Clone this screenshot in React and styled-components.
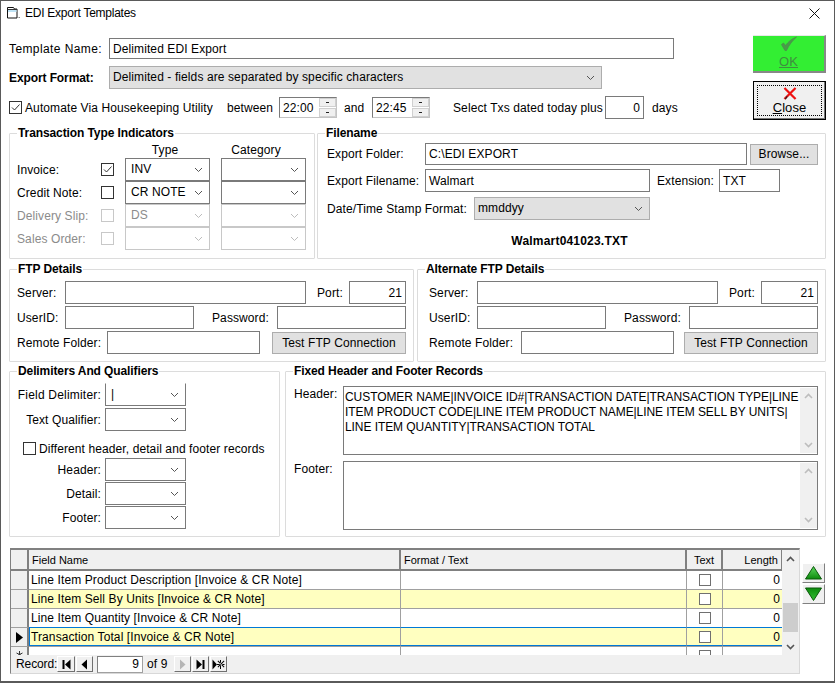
import React from 'react';
import styled, { createGlobalStyle } from 'styled-components';

const GlobalStyle = createGlobalStyle`
    html, body { margin: 0; padding: 0; background: #fff; }
    * { box-sizing: border-box; }
    body {
        font-family: "Liberation Sans", Arial, sans-serif;
        font-size: 12px;
        letter-spacing: .1px;
        color: #000;
    }
`

const Window = styled.div`
    width: 835px;
    height: 683px;
    border: 1px solid #5a5a5a;
    border-bottom-width: 2px;
    background: #fff;
    overflow: hidden;
`
const TitleBar = styled.div`
    height: 29px;
    display: flex;
    align-items: center;
    padding: 0 14px 5px 5px;
    gap: 4px;
`
const Title = styled.span`
    flex: 1;
    letter-spacing: -.25px;
`
const Main = styled.div`
    padding: 0 8px 0 8px;
`
const Top = styled.div`
    display: flex;
    height: 96px;
    padding-top: 5px;
`
const TopForm = styled.div`
    width: 744px;
    padding-top: 3px;
    display: flex;
    flex-direction: column;
`
const Row = styled.div`
    display: flex;
    align-items: ${p => p.$top ? 'flex-start' : 'center'};
    margin-top: ${p => p.$mt || 0}px;
    margin-left: ${p => p.$ml || 0}px;
    height: ${p => p.$h ? p.$h + 'px' : 'auto'};
`
const Label = styled.label`
    width: ${p => p.$w ? p.$w + 'px' : 'auto'};
    flex: none;
    white-space: nowrap;
    margin-left: ${p => p.$ml || 0}px;
    padding-top: ${p => p.$pt || 0}px;
    font-weight: ${p => p.$bold ? 'bold' : 'normal'};
    letter-spacing: ${p => p.$ls === undefined ? '.1' : p.$ls}px;
    text-align: ${p => p.$right ? 'right' : 'left'};
    color: ${p => p.$off ? '#8b8b8b' : '#000'};
`
const Input = styled.div`
    width: ${p => p.$w}px;
    height: ${p => p.$h || 23}px;
    margin-left: ${p => p.$ml || 0}px;
    flex: none;
    display: flex;
    align-items: center;
    justify-content: ${p => p.$right ? 'flex-end' : 'flex-start'};
    padding: 0 3px;
    border: 1px solid #7a7a7a;
    background: #fff;
    white-space: nowrap;
`
const Combo = styled.div`
    width: ${p => p.$w}px;
    height: ${p => p.$h || 23}px;
    margin-left: ${p => p.$ml || 0}px;
    flex: none;
    display: flex;
    align-items: center;
    justify-content: space-between;
    padding: 0 6px 0 ${p => p.$pl || 5}px;
    border: 1px solid ${p => p.$off ? '#c8c8c8' : p.$grey ? '#adadad' : '#7a7a7a'};
    border-top-color: ${p => p.$noTop ? 'transparent' : p.$off ? '#c8c8c8' : p.$grey ? '#adadad' : '#7a7a7a'};
    background: ${p => p.$grey ? '#e1e1e1' : '#fff'};
    color: ${p => p.$off ? '#8b8b8b' : '#000'};
    white-space: nowrap;
    & > span { padding-bottom: 1px; }
`
const Check = styled.span`
    width: 13px;
    height: 13px;
    flex: none;
    display: inline-block;
    margin-left: ${p => p.$ml || 0}px;
    border: 1px solid ${p => p.$off ? '#c8c8c8' : '#333'};
    background: #fff;
    & svg { display: block; }
`
const SpinBox = styled.div`
    width: 58px;
    height: 21px;
    flex: none;
    margin-left: ${p => p.$ml || 0}px;
    display: flex;
    align-items: center;
    justify-content: space-between;
    padding-left: 3px;
    border: 1px solid #c4c4c4;
    border-top-color: #7a7a7a;
    border-left-color: #7a7a7a;
`
const SpinBtns = styled.div`
    width: 17px;
    height: 19px;
    display: flex;
    flex-direction: column;
    gap: 1px;
`
const SpinBtn = styled.div`
    flex: 1;
    background: #f0f0f0;
    border: 1px solid #d0d0d0;
    display: flex;
    align-items: center;
    justify-content: center;
    &::after {
        content: "";
        width: 3px;
        height: 1px;
        background: #222;
    }
`
const SideButtons = styled.div`
    margin-left: 1px;
    width: 73px;
    flex: none;
    display: flex;
    flex-direction: column;
    gap: 8px;
`
const OkButton = styled.div`
    height: 38px;
    background: #33ee33;
    border-right: 2px solid #888;
    border-bottom: 2px solid #888;
    border-top: 1px solid #e8e8e8;
    display: flex;
    flex-direction: column;
    align-items: center;
    color: #3f8f3f;
    & u { line-height: 14px; margin-top: 3px; font-size: 13px; }
`
const CloseButton = styled.div`
    height: 39px;
    border: 1px solid #000;
    background: #f0f0f0;
    padding: 3px;
    box-shadow: inset -1px -1px 0 #777;
`
const CloseInner = styled.div`
    height: 100%;
    border: 1px dotted #000;
    display: flex;
    flex-direction: column;
    align-items: center;
    padding-top: 1px;
    & u { line-height: 14px; }
    & span { line-height: 15px; font-size: 13px; }
`
const SectionRow = styled.div`
    display: flex;
    justify-content: space-between;
    margin-top: ${p => p.$mt || 0}px;
`
const Group = styled.fieldset`
    margin: 0;
    min-width: 0;
    width: ${p => p.$w}px;
    height: ${p => p.$h}px;
    padding: ${p => p.$pt || 0}px 7px 0 ${p => p.$pl || 7}px;
    border: 1px solid #dcdcdc;
    border-radius: 1px;
`
const Legend = styled.legend`
    font-weight: bold;
    font-size: 12px;
    line-height: 15px;
    letter-spacing: -.1px;
    padding: 0 1px;
    margin-left: ${p => p.$ml || 0}px;
`
const ColHeads = styled.div`
    display: flex;
    height: 15px;
    line-height: 14px;
    margin-top: 2px;
    margin-left: 108px;
`
const ColHead = styled.div`
    width: ${p => p.$w}px;
    margin-right: 11px;
    text-align: center;
`
const Stamp = styled.div`
    font-weight: bold;
    letter-spacing: .2px;
    text-align: center;
    margin-top: 14px;
    padding-right: 4px;
`
const Button = styled.div`
    width: ${p => p.$w}px;
    height: ${p => p.$h || 22}px;
    margin-left: ${p => p.$ml || 0}px;
    flex: none;
    background: #e1e1e1;
    border: 1px solid #adadad;
    display: flex;
    align-items: center;
    justify-content: center;
`
const MemoWrap = styled.div`
    width: ${p => p.$w}px;
    height: ${p => p.$h}px;
    flex: none;
    border: 1px solid #7a7a7a;
    padding: 3px 20px 0 1px;
    line-height: 15px;
    letter-spacing: -.07px;
    position: relative;
    overflow: hidden;
    white-space: nowrap;
`
const MemoScroll = styled.div`
    position: absolute;
    top: 1px;
    right: 0;
    bottom: 1px;
    width: 17px;
    background: #f0f0f0;
    display: flex;
    flex-direction: column;
    justify-content: space-between;
    align-items: center;
    padding: 5px 0;
`
const GridRow = styled.div`
    display: flex;
    margin-top: 11px;
    margin-left: 1px;
    gap: 2px;
`
const GridBox = styled.div`
    width: 790px;
    height: 126px;
    border: 1px solid #d8d8d8;
    border-top: 2px solid #808080;
    border-left: 1px solid #808080;
    background: #fff;
    display: flex;
    flex-direction: column;
`
const GridBody = styled.div`
    flex: 1;
    min-height: 0;
    display: flex;
`
const Sheet = styled.div`
    width: 772px;
    overflow: hidden;
`
const Cols = styled.div`
    display: grid;
    grid-template-columns: 18px 372px 286px 36px 60px;
    grid-auto-rows: 19px;
    grid-template-rows: 21px;
    background: #a0a0a0;
`
const HeadCell = styled.div`
    background: #f0f0f0;
    border-right: 2px solid #808080;
    border-bottom: 2px solid #808080;
    display: flex;
    align-items: center;
    font-size: 11px;
    letter-spacing: 0;
    padding: 0 3px;
    justify-content: ${p => p.$align || 'flex-start'};
`
const SelCell = styled.div`
    background: #f0f0f0;
    border-right: 2px solid #808080;
    border-bottom: 1px solid #a0a0a0;
    display: flex;
    align-items: center;
    justify-content: center;
`
const Cell = styled.div`
    background: ${p => p.$alt ? '#ffffc0' : '#fff'};
    border-right: 1px solid ${p => p.$cur && p.$last ? '#0078d7' : '#a0a0a0'};
    border-bottom: 1px solid ${p => p.$cur ? '#0078d7' : '#a0a0a0'};
    border-top: ${p => p.$cur ? '1px solid #0078d7' : 'none'};
    border-left: ${p => p.$cur && p.$first ? '1px solid #0078d7' : 'none'};
    margin-top: ${p => p.$cur ? '-1px' : 0};
    height: ${p => p.$cur ? '19px' : 'auto'};
    display: flex;
    align-items: center;
    padding: ${p => p.$cur ? 1 : 0}px 2px ${p => p.$cur ? 0 : 1}px ${p => p.$cur && p.$first ? 1 : 2}px;
    white-space: nowrap;
    justify-content: ${p => p.$align || 'flex-start'};
`
const CellCheck = styled.span`
    width: 12px;
    height: 12px;
    background: #fff;
    border: 1px solid #707070;
`
const VScroll = styled.div`
    width: 17px;
    background: #f0f0f0;
    display: flex;
    flex-direction: column;
    align-items: center;
    padding-top: 6px;
`
const Thumb = styled.div`
    width: 15px;
    height: 29px;
    background: #cdcdcd;
    margin-top: 41px;
    margin-bottom: 12px;
`
const NavBar = styled.div`
    height: 18px;
    flex: none;
    background: #f0f0f0;
    display: flex;
    align-items: center;
    padding-left: 5px;
`
const NavBtn = styled.div`
    width: ${p => p.$w || 17}px;
    height: 16px;
    margin-left: ${p => p.$ml || 0}px;
    background: #f0f0f0;
    border-top: 1px solid #fff;
    border-left: 1px solid #fff;
    border-right: 1px solid #707070;
    border-bottom: 1px solid #707070;
    display: flex;
    align-items: center;
    justify-content: center;
`
const RecordInput = styled.div`
    width: 46px;
    height: 17px;
    margin-left: 4px;
    background: #fff;
    border: 1px solid #a0a0a0;
    border-top-color: #808080;
    border-left-color: #808080;
    text-align: right;
    padding-right: 3px;
    line-height: 15px;
`
const Arrows = styled.div`
    padding-top: 15px;
    display: flex;
    flex-direction: column;
    gap: 1px;
`
const ArrowBtn = styled.div`
    width: 23px;
    height: 20px;
    background: #f0f0f0;
    border-top: 1px solid #fff;
    border-left: 1px solid #fff;
    border-right: 1px solid #808080;
    border-bottom: 1px solid #808080;
    display: flex;
    align-items: center;
    justify-content: center;
`

const Chevron = ({ off, size = 9 }) => (
    <svg width={size} height="6" viewBox="0 0 9 6" fill="none" style={{ flex: 'none' }}>
        <path d="M1 1l3.5 3.5L8 1" stroke={off ? '#bcbcbc' : '#555'} strokeWidth="1" />
    </svg>
)
const Tick = ({ off }) => (
    <svg width="11" height="11" viewBox="0 0 11 11" fill="none">
        <path d="M2 5.5l2.5 2.5L9.5 2.5" stroke={off ? '#bbb' : '#333'} strokeWidth="1" />
    </svg>
)
const ScrollChevron = ({ up, light }) => (
    <svg width="9" height="6" viewBox="0 0 9 6" fill="none">
        <path d={up ? 'M1 5l3.5-3.5L8 5' : 'M1 1l3.5 3.5L8 1'} stroke={light ? '#bdbdbd' : '#555'} strokeWidth="1.6" />
    </svg>
)
const WinIcon = () => (
    <svg width="15" height="14" viewBox="0 0 15 14" fill="none">
        <path d="M1.500 1.500h6l1 1.500h2.500v9h-9.500z" fill="#fff" stroke="#111" strokeWidth="1" />
        <path d="M2 4h8.500v2H2z" fill="#bfe3f5" />
        <path d="M1.500 3.500h9.500" stroke="#333" strokeWidth="1" />
        <path d="M12.500 11.500h1.500" stroke="#888" strokeWidth="1" />
    </svg>
)
const CloseX = () => (
    <svg width="11" height="11" viewBox="0 0 11 11" fill="none">
        <path d="M.5.5l10 10M10.5.5l-10 10" stroke="#111" strokeWidth="1" />
    </svg>
)
const OkTick = () => (
    <svg width="18" height="16" viewBox="0 0 18 16" fill="none">
        <path d="M1.500 8.500l2-1.500 2 2.500C8 6 12 2.500 16.500 1 12.500 4.500 9 9 6.500 14.500H5z" fill="#4a9a4a" stroke="#4a8f4a" strokeWidth=".8" />
    </svg>
)
const RedX = () => (
    <svg width="16" height="14" viewBox="0 0 16 14" fill="none">
        <path d="M2 1l12 12M14 1L2 13" stroke="#ee1111" strokeWidth="2.4" />
        <path d="M5 10l-2 3" stroke="#222" strokeWidth="1.2" />
    </svg>
)
const Tri = ({ up }) => (
    <svg width="17" height="14" viewBox="0 0 17 14">
        <defs>
            <linearGradient id={up ? 'triUp' : 'triDown'} x1="0" y1="0" x2="0" y2="1">
                <stop offset="0" stopColor={up ? '#5fd85f' : '#0c8a0c'} />
                <stop offset="1" stopColor={up ? '#0c8a0c' : '#35c035'} />
            </linearGradient>
        </defs>
        <path
            d={up ? 'M8.500 .5L16.500 13H.5z' : 'M.5 1H16.500L8.500 13.500z'}
            fill={`url(#${up ? 'triUp' : 'triDown'})`}
            stroke="#0a5a0a"
        />
    </svg>
)
const NavGlyph = ({ d, fill = '#000' }) => (
    <svg width="13" height="11" viewBox="0 0 13 11">
        <path d={d} fill={fill} />
    </svg>
)
const Pointer = () => (
    <svg width="7" height="11" viewBox="0 0 7 11">
        <path d="M0 0l7 5.500L0 11z" fill="#000" />
    </svg>
)
const NewRowMark = () => (
    <svg width="7" height="19" viewBox="0 0 7 19" fill="none">
        <path d="M3.500 4v7M.5 6l6 3M6.500 6l-6 3" stroke="#333" strokeWidth="1" />
    </svg>
)

const tx = [
    { name: 'Invoice:', type: 'INV', checked: true },
    { name: 'Credit Note:', type: 'CR NOTE' },
    { name: 'Delivery Slip:', type: 'DS', off: true },
    { name: 'Sales Order:', type: '', off: true },
]

const fields = [
    { name: 'Line Item Product Description [Invoice & CR Note]' },
    { name: 'Line Item Sell By Units [Invoice & CR Note]', alt: true },
    { name: 'Line Item Quantity [Invoice & CR Note]' },
    { name: 'Transaction Total [Invoice & CR Note]', alt: true, cur: true },
    { name: '', empty: true },
]

const FtpGroup = ({ title, width, pl, legendShift = 0, folderLabel = 90 }) => (
    <Group $w={width} $h={100} $pt={4} $pl={pl}>
        <Legend $ml={legendShift}>{title}</Legend>
        <Row $h={23}>
            <Label $w={48}>Server:</Label>
            <Input $w={241} />
            <Label $ml={11} $w={32}>Port:</Label>
            <Input $w={57} $right>21</Input>
        </Row>
        <Row $h={23} $mt={2}>
            <Label $w={48}>UserID:</Label>
            <Input $w={129} />
            <Label $ml={18} $w={65}>Password:</Label>
            <Input $w={129} />
        </Row>
        <Row $h={23} $mt={2}>
            <Label $w={folderLabel}>Remote Folder:</Label>
            <Input $w={153} />
            <Button $w={134} $ml={102 - folderLabel}>Test FTP Connection</Button>
        </Row>
    </Group>
)

const App = () => {
    return (
        <Window>
            <GlobalStyle />
            <TitleBar>
                <WinIcon />
                <Title>EDI Export Templates</Title>
                <CloseX />
            </TitleBar>
            <Main>
                <Top>
                    <TopForm>
                        <Row $h={21}>
                            <Label $w={100} $ls={.4}>Template Name:</Label>
                            <Input $w={565} $h={21}>Delimited EDI Export</Input>
                        </Row>
                        <Row $h={23} $mt={7}>
                            <Label $w={100} $bold $ls={-.1}>Export Format:</Label>
                            <Combo $w={493} $grey $pl={3}>
                                <span>Delimited - fields are separated by specific characters</span>
                                <Chevron />
                            </Combo>
                        </Row>
                        <Row $h={21} $mt={8}>
                            <Check><Tick /></Check>
                            <Label $ml={3} $w={190}>Automate Via Housekeeping Utility</Label>
                            <Label $ml={12} $w={52}>between</Label>
                            <SpinBox>22:00<SpinBtns><SpinBtn /><SpinBtn /></SpinBtns></SpinBox>
                            <Label $ml={7} $w={28}>and</Label>
                            <SpinBox>22:45<SpinBtns><SpinBtn /><SpinBtn /></SpinBtns></SpinBox>
                            <Label $ml={23} $w={152}>Select Txs dated today plus</Label>
                            <Input $w={39} $h={23} $right>0</Input>
                            <Label $ml={8}>days</Label>
                        </Row>
                    </TopForm>
                    <SideButtons>
                        <OkButton>
                            <OkTick />
                            <u>OK</u>
                        </OkButton>
                        <CloseButton>
                            <CloseInner>
                                <RedX />
                                <span><u>C</u>lose</span>
                            </CloseInner>
                        </CloseButton>
                    </SideButtons>
                </Top>
                <SectionRow>
                    <Group $w={306} $h={133}>
                        <Legend>Transaction Type Indicators</Legend>
                        <ColHeads>
                            <ColHead $w={85}>Type</ColHead>
                            <ColHead $w={85}>Category</ColHead>
                        </ColHeads>
                        {tx.map(t => (
                            <Row $h={23} key={t.name}>
                                <Label $w={84} $off={t.off}>{t.name}</Label>
                                <Check $off={t.off}>{t.checked && <Tick />}</Check>
                                <Combo $w={85} $ml={11} $off={t.off}>
                                    <span>{t.type}</span>
                                    <Chevron off={t.off} />
                                </Combo>
                                <Combo $w={85} $ml={11} $off={t.off}>
                                    <span />
                                    <Chevron off={t.off} />
                                </Combo>
                            </Row>
                        ))}
                    </Group>
                    <Group $w={509} $h={133} $pt={2}>
                        <Legend>Filename</Legend>
                        <Row $h={22} $ml={2}>
                            <Label $w={98}>Export Folder:</Label>
                            <Input $w={322} $h={22}>C:\EDI EXPORT</Input>
                            <Button $w={68} $h={21} $ml={3}>Browse...</Button>
                        </Row>
                        <Row $h={23} $mt={4} $ml={2}>
                            <Label $w={98}>Export Filename:</Label>
                            <Input $w={225}>Walmart</Input>
                            <Label $ml={7} $w={62}>Extension:</Label>
                            <Input $w={61}>TXT</Input>
                        </Row>
                        <Row $h={23} $mt={5} $ml={2}>
                            <Label $w={147}>Date/Time Stamp Format:</Label>
                            <Combo $w={176} $grey $pl={3}>
                                <span>mmddyy</span>
                                <Chevron />
                            </Combo>
                        </Row>
                        <Stamp>Walmart041023.TXT</Stamp>
                    </Group>
                </SectionRow>
                <SectionRow $mt={3}>
                    <FtpGroup title="FTP Details" width={405} />
                    <FtpGroup title="Alternate FTP Details" width={409} pl={11} legendShift={-4} folderLabel={92} />
                </SectionRow>
                <SectionRow $mt={2}>
                    <Group $w={271} $h={173} $pt={4}>
                        <Legend>Delimiters And Qualifiers</Legend>
                        <Row $h={23}>
                            <Label $w={84} $right $ls={.2}>Field Delimiter:</Label>
                            <Combo $w={81} $ml={4} $noTop><span>|</span><Chevron /></Combo>
                        </Row>
                        <Row $h={23} $mt={2}>
                            <Label $w={84} $right>Text Qualifier:</Label>
                            <Combo $w={81} $ml={4}><span /><Chevron /></Combo>
                        </Row>
                        <Row $h={15} $mt={10} $ml={6}>
                            <Check />
                            <Label $ml={3}>Different header, detail and footer records</Label>
                        </Row>
                        <Row $h={23} $mt={2}>
                            <Label $w={84} $right>Header:</Label>
                            <Combo $w={81} $ml={4}><span /><Chevron /></Combo>
                        </Row>
                        <Row $h={23} $mt={1}>
                            <Label $w={84} $right>Detail:</Label>
                            <Combo $w={81} $ml={4}><span /><Chevron /></Combo>
                        </Row>
                        <Row $h={23} $mt={1}>
                            <Label $w={84} $right>Footer:</Label>
                            <Combo $w={81} $ml={4}><span /><Chevron /></Combo>
                        </Row>
                    </Group>
                    <Group $w={541} $h={173} $pt={7}>
                        <Legend>Fixed Header and Footer Records</Legend>
                        <Row $top $ml={1}>
                            <Label $w={49} $pt={1}>Header:</Label>
                            <MemoWrap $w={475} $h={69}>
                                CUSTOMER NAME|INVOICE ID#|TRANSACTION DATE|TRANSACTION TYPE|LINE<br />
                                ITEM PRODUCT CODE|LINE ITEM PRODUCT NAME|LINE ITEM SELL BY UNITS|<br />
                                LINE ITEM QUANTITY|TRANSACTION TOTAL
                                <MemoScroll><ScrollChevron up light /><ScrollChevron light /></MemoScroll>
                            </MemoWrap>
                        </Row>
                        <Row $top $mt={6} $ml={1}>
                            <Label $w={49} $pt={1}>Footer:</Label>
                            <MemoWrap $w={475} $h={69}>
                                <MemoScroll><ScrollChevron up light /><ScrollChevron light /></MemoScroll>
                            </MemoWrap>
                        </Row>
                    </Group>
                </SectionRow>
                <GridRow>
                    <GridBox>
                        <GridBody>
                            <Sheet>
                                <Cols>
                                    <HeadCell />
                                    <HeadCell>Field Name</HeadCell>
                                    <HeadCell>Format / Text</HeadCell>
                                    <HeadCell $align="center">Text</HeadCell>
                                    <HeadCell $align="flex-end">Length</HeadCell>
                                    {fields.map((f, i) => (
                                        <React.Fragment key={i}>
                                            <SelCell>{f.cur && <Pointer />}{f.empty && <NewRowMark />}</SelCell>
                                            <Cell $alt={f.alt} $cur={f.cur} $first>{f.name}</Cell>
                                            <Cell $alt={f.alt} $cur={f.cur} />
                                            <Cell $alt={f.alt} $cur={f.cur} $align="center"><CellCheck /></Cell>
                                            <Cell $alt={f.alt} $cur={f.cur} $last $align="flex-end">{f.empty ? '' : 0}</Cell>
                                        </React.Fragment>
                                    ))}
                                </Cols>
                            </Sheet>
                            <VScroll>
                                <ScrollChevron up />
                                <Thumb />
                                <ScrollChevron />
                            </VScroll>
                        </GridBody>
                        <NavBar>
                            <Label $w={37} $ls={-.1}>Record:</Label>
                            <NavBtn $ml={4} $w={18}><NavGlyph d="M2.500 1h2v9h-2zM10.500 .5v10l-5.500-5z" /></NavBtn>
                            <NavBtn $ml={1}><NavGlyph d="M9 .5v10l-5.500-5z" /></NavBtn>
                            <RecordInput>9</RecordInput>
                            <Label $ml={4} $w={19}>of 9</Label>
                            <NavBtn $ml={8}><NavGlyph d="M4 .5v10l5.500-5z" fill="#b5b5b5" /></NavBtn>
                            <NavBtn $ml={1}><NavGlyph d="M2.500 .5v10l5.500-5zM8.500 1h2v9h-2z" /></NavBtn>
                            <NavBtn $ml={1}><NavGlyph d="M.5 .5v10l4.500-5zM8 1h1v9H8zM4.500 5h8v1h-8zM5.500 2.200l6.300 6.300.7-.7-6.300-6.300zM11.800 1.500L5.500 7.800l.7.7 6.300-6.300z" /></NavBtn>
                        </NavBar>
                    </GridBox>
                    <Arrows>
                        <ArrowBtn><Tri up /></ArrowBtn>
                        <ArrowBtn><Tri /></ArrowBtn>
                    </Arrows>
                </GridRow>
            </Main>
        </Window>
    );
};

export default App;
